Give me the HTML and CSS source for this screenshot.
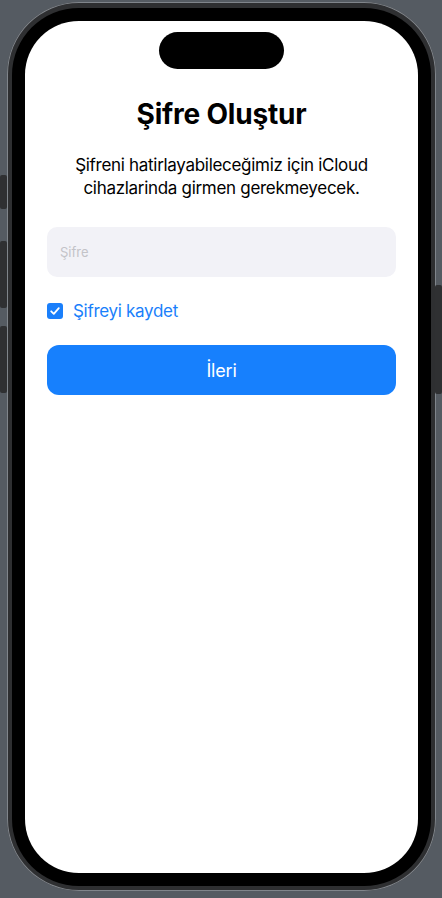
FILE: index.html
```html
<!DOCTYPE html>
<html lang="tr">
<head>
<meta charset="utf-8">
<link rel="stylesheet" href="styles.css">
</head>
<body>
<div class="phone">
  <span class="btn btn-action"></span>
  <span class="btn btn-vol-up"></span>
  <span class="btn btn-vol-down"></span>
  <span class="btn btn-power"></span>
  <div class="bezel">
    <div class="screen">
      <div class="island"></div>
      <h1 class="title">Şifre Oluştur</h1>
      <p class="subtitle">Şifreni hatirlayabileceğimiz için iCloud<br>cihazlarinda girmen gerekmeyecek.</p>
      <div class="field">Şifre</div>
      <label class="save-row">
        <span class="checkbox">
          <svg viewBox="0 0 16 16" width="16" height="16"><polyline points="4.2,8.3 6.8,10.9 11.8,5.2" fill="none" stroke="#fff" stroke-width="1.8" stroke-linecap="round" stroke-linejoin="round"/></svg>
        </span>
        <span class="save-label">Şifreyi kaydet</span>
      </label>
      <div class="next-btn">İleri</div>
    </div>
  </div>
</div>
</body>
</html>
```
FILE: styles.css
```css
html, body {
  margin: 0;
  padding: 0;
}
body {
  background: #555b62;
  width: 442px;
  height: 898px;
  overflow: hidden;
  font-family: Inter, "Noto Sans", sans-serif;
}
.phone {
  position: relative;
  box-sizing: border-box;
  width: 429px;
  height: 889px;
  margin: 2px 0 0 7px;
  padding: 6px 5px 5px;
  border-radius: 72px;
  background: #2e2f31;
  box-shadow: inset 0 0 0 1px #80858b;
}
.btn {
  position: absolute;
  width: 7px;
  background: #2f3032;
  border-radius: 2px;
}
.btn-action { left: -7px; top: 173px; height: 34px; }
.btn-vol-up { left: -7px; top: 239px; height: 67px; }
.btn-vol-down { left: -7px; top: 324px; height: 67px; }
.btn-power { left: 428px; top: 283px; height: 109px; }
.bezel {
  box-sizing: border-box;
  height: 100%;
  padding: 13px;
  border-radius: 67px;
  background: #000;
}
.screen {
  box-sizing: border-box;
  width: 393px;
  height: 852px;
  border-radius: 54px;
  background: #fff;
  display: flex;
  flex-direction: column;
  align-items: center;
  padding: 11px 22px 0;
}
.island {
  width: 125px;
  height: 37px;
  border-radius: 19px;
  background: #000;
  flex: none;
}
.title {
  margin: 28px 0 0;
  font-size: 28px;
  line-height: 34px;
  font-weight: 700;
  color: #000;
  letter-spacing: -0.2px;
}
.subtitle {
  margin: 23px 0 0;
  font-size: 17px;
  line-height: 23px;
  text-align: center;
  color: #000;
  letter-spacing: -0.3px;
}
.field {
  box-sizing: border-box;
  align-self: stretch;
  height: 50px;
  margin-top: 27px;
  border-radius: 10px;
  background: #f2f2f7;
  padding: 0 13px;
  display: flex;
  align-items: center;
  font-size: 13px;
  color: #c3c3c8;
}
.save-row {
  align-self: stretch;
  display: flex;
  align-items: center;
  gap: 10px;
  margin-top: 23px;
  height: 22px;
}
.checkbox {
  width: 16px;
  height: 16px;
  border-radius: 3px;
  background: #1a7ffb;
  display: flex;
}
.save-label {
  font-size: 17px;
  color: #1a7ffb;
  letter-spacing: -0.3px;
}
.next-btn {
  box-sizing: border-box;
  align-self: stretch;
  height: 50px;
  margin-top: 23px;
  border-radius: 12px;
  background: #1780fd;
  color: #fff;
  font-size: 18px;
  display: flex;
  align-items: center;
  justify-content: center;
  letter-spacing: -0.2px;
}
```
